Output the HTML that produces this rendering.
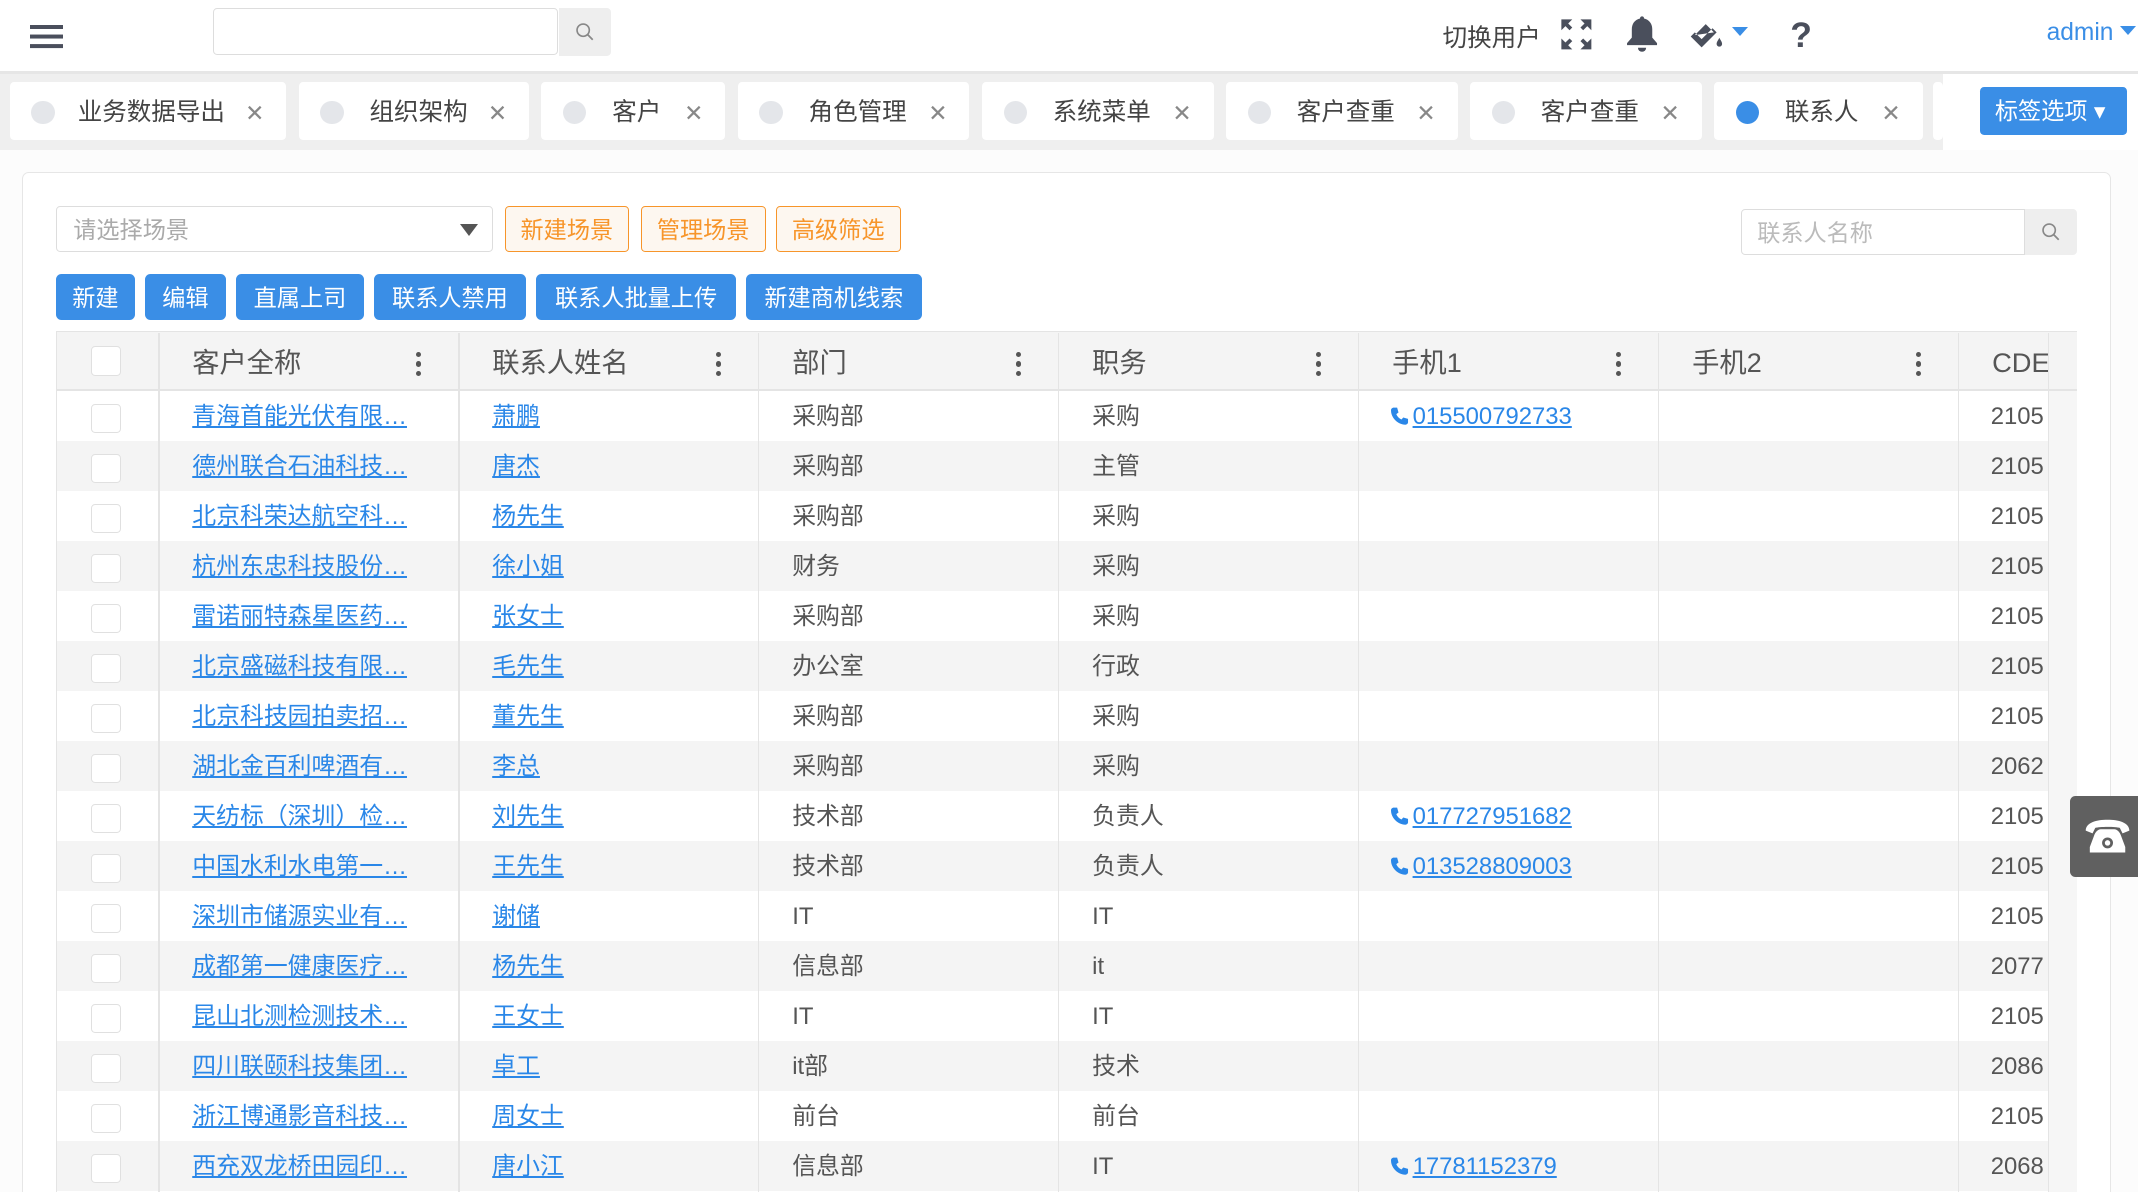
<!DOCTYPE html>
<html><head><meta charset="utf-8">
<style>
html,body{margin:0;padding:0;background:#fff;overflow:hidden;width:2138px;height:1192px}
#z{zoom:1.36352;width:1568px;height:874px;position:relative;overflow:hidden;font-family:"Liberation Sans","Noto Sans CJK SC",sans-serif;color:#555;background:#fff}
.a{position:absolute}
.tab{position:absolute;top:60px;height:43px;background:#fff;border-radius:3px;font-size:18px;color:#444;line-height:46px}
.tab .d{position:absolute;left:16px;top:14px;width:17px;height:17px;border-radius:50%;background:#e4e6ea}
.tab .x{position:absolute;right:16px;top:0;color:#888;font-size:17px}
.ob{position:absolute;top:151px;height:32px;border:1px solid #f7952a;border-radius:3px;background:#fdf7f0;color:#f7952a;font-size:17px;line-height:35px;text-align:center}
.bb{position:absolute;top:201px;height:34px;background:#3a8ee6;border-radius:4px;color:#fff;font-size:17px;line-height:36px;text-align:center}
.th{position:absolute;top:244px;height:42px;line-height:44px;font-size:20px;color:#555}
.row{position:absolute;left:42px;width:1460px;height:36.67px;font-size:17.5px;line-height:38px}
.row.g{background:#f4f4f4}
.row span{position:absolute;top:0}
.lk{color:#2a87e8;text-decoration:underline}
.cb{position:absolute;left:25px;top:9px;width:20px;height:20px;border:1px solid #e0e0e0;border-radius:3px;background:#fff}
.vl{position:absolute;top:244px;width:1px;height:630px;background:#e4e4e4}
.dots{position:absolute;top:258px;width:4px}
.dots i{display:block;width:4px;height:4px;border-radius:2px;background:#555;margin-bottom:3px}
</style></head><body><div id="z">
<div class="a" style="left:22px;top:18px;width:24px;height:3px;background:#4a4f5c;box-shadow:0 7px 0 #4a4f5c,0 14px 0 #4a4f5c"></div>
<div class="a" style="left:156px;top:6px;width:252px;height:33px;border:1px solid #ddd;border-radius:3px"></div>
<div class="a" style="left:410px;top:6px;width:38px;height:35px;background:#eee;border-radius:0 3px 3px 0;color:#888;font-size:15px;text-align:center;line-height:34px">
<svg width="14" height="14" viewBox="0 0 14 14" style="margin-top:10px"><circle cx="6" cy="6" r="4.5" fill="none" stroke="#888" stroke-width="1.2"/><path d="M9.3 9.3L13 13" stroke="#888" stroke-width="1.3"/></svg></div>
<div class="a" style="left:1058px;top:14px;font-size:18px;color:#444">切换用户</div>
<svg class="a" style="left:1144px;top:13px" width="24" height="24" viewBox="0 0 24 24" fill="#4a4f5c"><path d="M1 1h8l-3 3 3 3-2 2-3-3-3 3zM23 1v8l-3-3-3 3-2-2 3-3-3-3zM1 23v-8l3 3 3-3 2 2-3 3 3 3zM23 23h-8l3-3-3-3 2-2 3 3 3-3z"/></svg>
<svg class="a" style="left:1192px;top:11px" width="25" height="28" viewBox="0 0 25 28" fill="#4a4f5c"><path d="M12.5 1c1 0 1.5.8 1.5 1.6 4 1 6 4 6 8v6l3.5 4v1.5h-22v-1.5l3.5-4v-6c0-4 2-7 6-8 0-.8.5-1.6 1.5-1.6z"/><path d="M9.5 24h6a3 3 0 0 1-6 0z"/></svg>
<svg class="a" style="left:1238px;top:12px" width="28" height="26" viewBox="0 0 28 26" fill="#4a4f5c"><path d="M10 1l3 3-11 11 8 8 11-11-3-3-8 8-5-5 8-8z M5 14l8-8 6 6z"/><path d="M23 16c1 2 2 3 2 4.5a2 2 0 0 1-4 0c0-1.5 1-2.5 2-4.5z"/></svg>
<div class="a" style="left:1270px;top:20px;border-left:6px solid transparent;border-right:6px solid transparent;border-top:7px solid #3a8ee6"></div>
<div class="a" style="left:1313px;top:11px;font-size:26px;font-weight:bold;color:#4a4f5c">?</div>
<div class="a" style="left:1501px;top:14px;font-size:18px;color:#3a8ee6">admin</div>
<div class="a" style="left:1555px;top:19px;border-left:6px solid transparent;border-right:6px solid transparent;border-top:7px solid #3a8ee6"></div>
<div class="a" style="left:0;top:52px;width:1425px;height:58px;background:#efefef"></div>
<div class="a" style="left:0;top:52px;width:1568px;height:2px;background:#e6e6e6"></div>
<div class="tab" style="left:7px;width:203px"><div class="d"></div><span style="position:absolute;left:50px">业务数据导出</span><span class="x">✕</span></div>
<div class="tab" style="left:219px;width:169px"><div class="d"></div><span style="position:absolute;left:52px">组织架构</span><span class="x">✕</span></div>
<div class="tab" style="left:397px;width:135px"><div class="d"></div><span style="position:absolute;left:52px">客户</span><span class="x">✕</span></div>
<div class="tab" style="left:541px;width:170px"><div class="d"></div><span style="position:absolute;left:52px">角色管理</span><span class="x">✕</span></div>
<div class="tab" style="left:720px;width:170px"><div class="d"></div><span style="position:absolute;left:52px">系统菜单</span><span class="x">✕</span></div>
<div class="tab" style="left:899px;width:170px"><div class="d"></div><span style="position:absolute;left:52px">客户查重</span><span class="x">✕</span></div>
<div class="tab" style="left:1078px;width:170px"><div class="d"></div><span style="position:absolute;left:52px">客户查重</span><span class="x">✕</span></div>
<div class="tab" style="left:1257px;width:153px"><div class="d" style="background:#3a8ee6"></div><span style="position:absolute;left:52px">联系人</span><span class="x">✕</span></div>
<div class="tab" style="left:1418px;width:7px"></div>
<div class="a" style="left:1452px;top:64px;width:108px;height:35px;background:#3a8ee6;border-radius:3px;color:#fff;font-size:17px;line-height:36px;padding-left:11px;box-sizing:border-box">标签选项 ▾</div>
<div class="a" style="left:0;top:110px;width:1568px;height:764px;background:#fcfcfc"></div>
<div class="a" style="left:16px;top:126px;width:1531px;height:760px;background:#fff;border:1px solid #e6e6e6;border-radius:5px"></div>
<div class="a" style="left:41px;top:151px;height:32px;border:1px solid #ddd;border-radius:3px;font-size:17px;color:#aaa;line-height:35px;padding-left:12px;width:307px">请选择场景</div>
<div class="a" style="left:337px;top:164px;border-left:7px solid transparent;border-right:7px solid transparent;border-top:9px solid #555"></div>
<div class="ob" style="left:370px;width:90px">新建场景</div>
<div class="ob" style="left:470px;width:90px">管理场景</div>
<div class="ob" style="left:569px;width:90px">高级筛选</div>
<div class="a" style="left:1277px;top:153px;border:1px solid #ddd;border-radius:3px 0 0 3px;font-size:17px;color:#bbb;line-height:35px;padding-left:11px;box-sizing:border-box;height:34px;width:208px">联系人名称</div>
<div class="a" style="left:1485px;top:153px;width:38px;height:34px;background:#eee;border-radius:0 3px 3px 0"><svg width="14" height="14" viewBox="0 0 14 14" style="margin:10px 12px"><circle cx="6" cy="6" r="4.5" fill="none" stroke="#888" stroke-width="1.2"/><path d="M9.3 9.3L13 13" stroke="#888" stroke-width="1.3"/></svg></div>
<div class="bb" style="left:41px;width:58px">新建</div>
<div class="bb" style="left:106px;width:60px">编辑</div>
<div class="bb" style="left:173px;width:94px">直属上司</div>
<div class="bb" style="left:274px;width:112px">联系人禁用</div>
<div class="bb" style="left:393px;width:147px">联系人批量上传</div>
<div class="bb" style="left:547px;width:129px">新建商机线索</div>
<div class="a" style="left:41px;top:243px;width:1482px;height:44px;background:#f4f4f4;border-top:1px solid #e4e4e4;border-bottom:2px solid #e4e4e4;box-sizing:border-box"></div>
<div class="a" style="left:1502px;top:287px;width:21px;height:587px;background:#f6f6f6"></div>
<div class="a" style="left:41px;top:243px;width:1px;height:631px;background:#e4e4e4"></div>
<div class="a" style="left:67px;top:254px;width:20px;height:20px;border:1px solid #e0e0e0;border-radius:3px;background:#fff"></div>
<div class="th" style="left:141px">客户全称</div><div class="dots" style="left:305px"><i></i><i></i><i></i></div>
<div class="th" style="left:361px">联系人姓名</div><div class="dots" style="left:525px"><i></i><i></i><i></i></div>
<div class="th" style="left:581px">部门</div><div class="dots" style="left:745px"><i></i><i></i><i></i></div>
<div class="th" style="left:801px">职务</div><div class="dots" style="left:965px"><i></i><i></i><i></i></div>
<div class="th" style="left:1021px">手机1</div><div class="dots" style="left:1185px"><i></i><i></i><i></i></div>
<div class="th" style="left:1241px">手机2</div><div class="dots" style="left:1405px"><i></i><i></i><i></i></div>
<div class="th" style="left:1461px;width:41px;overflow:hidden">CDE</div>
<div id="rows"></div>
<div class="vl" style="left:116px"></div><div class="vl" style="left:336px"></div><div class="vl" style="left:556px"></div><div class="vl" style="left:776px"></div><div class="vl" style="left:996px"></div><div class="vl" style="left:1216px"></div><div class="vl" style="left:1436px"></div><div class="vl" style="left:1502px"></div>
<div class="a" style="left:1518px;top:584px;width:60px;height:59px;background:#606060;border-radius:4px"><svg width="36" height="30" viewBox="0 0 36 30" style="margin:15px 0 0 10px" fill="#fff"><path d="M2 10c0-6 8-8 16-8s16 2 16 8l-5 2-2-4c-3-1-15-1-18 0l-2 4z"/><path d="M8 14c1-3 3-5 5-5h10c2 0 4 2 5 5l3 8v4H5v-4z"/><circle cx="18" cy="19" r="4" fill="#606060"/><circle cx="18" cy="19" r="2"/></svg></div>
</div>
<script>
var d=[["青海首能光伏有限…","萧鹏","采购部","采购","015500792733","2105"],
["德州联合石油科技…","唐杰","采购部","主管","","2105"],
["北京科荣达航空科…","杨先生","采购部","采购","","2105"],
["杭州东忠科技股份…","徐小姐","财务","采购","","2105"],
["雷诺丽特森星医药…","张女士","采购部","采购","","2105"],
["北京盛磁科技有限…","毛先生","办公室","行政","","2105"],
["北京科技园拍卖招…","董先生","采购部","采购","","2105"],
["湖北金百利啤酒有…","李总","采购部","采购","","2062"],
["天纺标（深圳）检…","刘先生","技术部","负责人","017727951682","2105"],
["中国水利水电第一…","王先生","技术部","负责人","013528809003","2105"],
["深圳市储源实业有…","谢储","IT","IT","","2105"],
["成都第一健康医疗…","杨先生","信息部","it","","2077"],
["昆山北测检测技术…","王女士","IT","IT","","2105"],
["四川联颐科技集团…","卓工","it部","技术","","2086"],
["浙江博通影音科技…","周女士","前台","前台","","2105"],
["西充双龙桥田园印…","唐小江","信息部","IT","17781152379","2068"]];
var h="";
var ph='<svg width="13" height="14" viewBox="0 0 13 14" style="vertical-align:-1px;margin-right:3px"><path d="M2 0.5l2.5 0 1 3.5-1.6 1.2c.7 1.8 2 3.2 3.8 4l1.3-1.5 3.5 1v2.5c0 1-1 1.8-2 1.8C5 13 0 8 0 2.5 0 1.4.9.5 2 .5z" fill="#2a87e8"/></svg>';
d.forEach(function(r,i){
var t=287+i*36.67;
h+='<div class="row'+(i%2?' g':'')+'" style="top:'+t+'px"><div class="cb"></div><span class="lk" style="left:99px">'+r[0]+'</span><span class="lk" style="left:319px">'+r[1]+'</span><span style="left:539px">'+r[2]+'</span><span style="left:759px">'+r[3]+'</span>'+(r[4]?'<span style="left:978px">'+ph+'<span class="lk" style="position:static">'+r[4]+'</span></span>':'')+'<span style="left:1418px">'+r[5]+'</span></div>';
});
document.getElementById("rows").innerHTML=h;
</script>
</body></html>
